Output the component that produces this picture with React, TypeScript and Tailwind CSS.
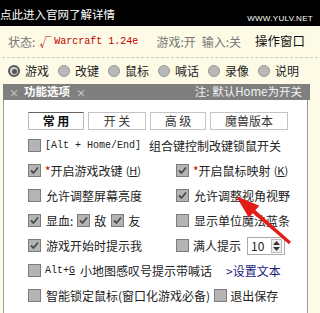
import React from "react";

const CJK = { fontFamily: '"Noto Sans CJK SC", "Noto Sans", sans-serif' };
const MONO = { fontFamily: '"Liberation Mono", "Noto Sans CJK SC", monospace' };

function Box({ checked = false }: { checked?: boolean }) {
  return (
    <span className="w-[13px] h-[13px] shrink-0 border border-[#7c7c7c] bg-[#b4b4b4] flex items-center justify-center">
      {checked && (
        <svg width="9" height="9" viewBox="0 0 9 9">
          <path d="M1 4.5 L3.5 7 L8 1.5" stroke="#4a4a4a" strokeWidth="1.8" fill="none" />
        </svg>
      )}
    </span>
  );
}

function Radio({ on = false, label }: { on?: boolean; label: string }) {
  return (
    <div className="flex items-center w-[50px]">
      {on ? (
        <span className="w-[12px] h-[12px] rounded-full border-2 border-[#5a5a5a] bg-[#d0d0d0] flex items-center justify-center">
          <span className="w-[5px] h-[5px] rounded-full bg-[#555]" />
        </span>
      ) : (
        <span className="w-[12px] h-[12px] rounded-full border border-[#999] bg-[#b8b8b8]" />
      )}
      <span className="ml-[5px] text-[12px] text-[#222]">{label}</span>
    </div>
  );
}

function Key({ k }: { k: string }) {
  return (
    <span className="text-[11px] ml-[3px] text-[#222]">
      (<span className="underline">{k}</span>)
    </span>
  );
}

function Tab({ label, w, active = false }: { label: string; w: string; active?: boolean }) {
  return (
    <div
      className={`${w} h-[18px] flex items-center justify-center text-[12px] border ${
        active ? "border-[#bbb] border-t-[#666] font-bold text-[#111]" : "border-[#c4c4c4] text-[#333]"
      } bg-white`}
    >
      {label}
    </div>
  );
}

export default function App() {
  return (
    <div className="w-[320px] h-[313px] overflow-hidden bg-[#fdfbe6] relative" style={CJK}>
      {/* top black bar */}
      <div className="h-[26px] bg-black flex items-start justify-between">
        <span className="text-white text-[11.5px] leading-none mt-[9px] ml-[0px]">点此进入官网了解详情</span>
        <span className="text-white text-[8px] leading-none mt-[15px] mr-[7px] tracking-[0.3px]" style={{ fontFamily: '"Liberation Sans", sans-serif' }}>
          WWW.YULV.NET
        </span>
      </div>
      {/* status */}
      <div className="h-[32px] flex items-center border-b border-dashed border-[#c8c8c8] mx-[2px] pl-[6px] text-[12px]">
        <span className="text-[#777]">状态:</span>
        <span className="text-[#c00000] ml-[4px]">√</span>
        <span className="text-[#c00000] ml-[3px] text-[10px]" style={MONO}>Warcraft 1.24e</span>
        <span className="text-[#777] ml-[18px]">游戏:开</span>
        <span className="text-[#777] ml-[6px]">输入:关</span>
        <span className="text-[#111] ml-[14px] text-[12.5px]">操作窗口</span>
      </div>
      {/* radios */}
      <div className="h-[26px] flex items-center pl-[8px]">
        <Radio on label="游戏" />
        <Radio label="改键" />
        <Radio label="鼠标" />
        <Radio label="喊话" />
        <Radio label="录像" />
        <Radio label="说明" />
      </div>
      {/* header */}
      <div className="ml-[3px] w-[307px] h-[16px] bg-[#7f7f7f] flex items-center justify-between text-white">
        <div className="flex items-center">
          <span className="text-[10px] ml-[6px] text-[#ddd]">×</span>
          <span className="text-[11.5px] font-bold ml-[5px]">功能选项</span>
          <span className="text-[10px] ml-[6px] text-[#ddd]">×</span>
        </div>
        <span className="text-[11.5px] mr-[8px] text-[#f2f2f2]">注: 默认Home为开关</span>
      </div>
      {/* panel */}
      <div className="ml-[3px] w-[305px] h-[220px] bg-white border-l border-r border-[#9a9a9a] pt-[12px] pl-[24px]">
        <div className="flex gap-[4px]">
          <Tab label="常 用" w="w-[56px]" active />
          <Tab label="开 关" w="w-[58px]" />
          <Tab label="高 级" w="w-[56px]" />
          <Tab label="魔兽版本" w="w-[78px]" />
        </div>
        <div className="mt-[3px] text-[12px] text-[#222]">
          <div className="h-[25px] flex items-center">
            <Box />
            <span className="ml-[4px] text-[10px]" style={MONO}>[Alt + Home/End]</span>
            <span className="ml-[8px]">组合键控制改键锁鼠开关</span>
          </div>
          <div className="h-[25px] grid grid-cols-[148px_1fr] items-center">
            <div className="flex items-center">
              <Box checked />
              <span className="ml-[4px] text-[#d00000]">*</span>
              <span>开启游戏改键</span>
              <Key k="H" />
            </div>
            <div className="flex items-center">
              <Box checked />
              <span className="ml-[4px] text-[#d00000]">*</span>
              <span>开启鼠标映射</span>
              <Key k="K" />
            </div>
          </div>
          <div className="h-[25px] grid grid-cols-[148px_1fr] items-center">
            <div className="flex items-center">
              <Box />
              <span className="ml-[5px]">允许调整屏幕亮度</span>
            </div>
            <div className="flex items-center">
              <Box checked />
              <span className="ml-[5px]">允许调整视角视野</span>
            </div>
          </div>
          <div className="h-[25px] grid grid-cols-[148px_1fr] items-center">
            <div className="flex items-center">
              <Box checked />
              <span className="ml-[5px]">显血:</span>
              <span className="ml-[4px] flex"><Box checked /></span>
              <span className="ml-[4px]">敌</span>
              <span className="ml-[5px] flex"><Box checked /></span>
              <span className="ml-[4px]">友</span>
            </div>
            <div className="flex items-center">
              <Box />
              <span className="ml-[5px]">显示单位魔法蓝条</span>
            </div>
          </div>
          <div className="h-[25px] grid grid-cols-[148px_1fr] items-center">
            <div className="flex items-center">
              <Box checked />
              <span className="ml-[5px]">游戏开始时提示我</span>
            </div>
            <div className="flex items-center">
              <Box />
              <span className="ml-[4px]">满人提示</span>
              <div className="ml-[6px] w-[38px] h-[18px] border border-[#aaa] bg-white flex items-center justify-between pl-[3px] pr-[2px]">
                <span className="text-[12px]">10</span>
                <div className="w-[11px] h-[14px] border border-[#bbb] bg-[#eee] flex flex-col items-center justify-center gap-[2px]">
                  <svg width="7" height="4" viewBox="0 0 7 4"><path d="M0 4 L3.5 0 L7 4Z" fill="#333" /></svg>
                  <svg width="7" height="4" viewBox="0 0 7 4"><path d="M0 0 L3.5 4 L7 0Z" fill="#333" /></svg>
                </div>
              </div>
            </div>
          </div>
          <div className="h-[25px] flex items-center">
            <Box />
            <span className="ml-[4px] text-[10px]" style={MONO}>Alt+<span className="underline">G</span></span>
            <span className="ml-[5px]">小地图感叹号提示带喊话</span>
            <span className="ml-[14px] text-[#1a1a7a]">&gt;设置文本</span>
          </div>
          <div className="h-[25px] flex items-center">
            <Box />
            <span className="ml-[5px]">智能锁定鼠标(窗口化游戏必备)</span>
            <span className="ml-[4px] flex"><Box /></span>
            <span className="ml-[3px]">退出保存</span>
          </div>
          <div className="h-[25px] flex items-center">
            <Box />
            <span className="ml-[5px]">屏蔽游戏中的小地图闪烁</span>
          </div>
        </div>
      </div>
      {/* red arrow overlay */}
      <svg className="absolute left-0 top-0 pointer-events-none" width="320" height="313" viewBox="0 0 320 313">
        <path d="M236 196 L259.3 205.7 L255.4 210.2 L291 241.8 L289 244.2 L252.8 213.2 L248.9 217.7 Z" fill="#e41b17" />
      </svg>
    </div>
  );
}
